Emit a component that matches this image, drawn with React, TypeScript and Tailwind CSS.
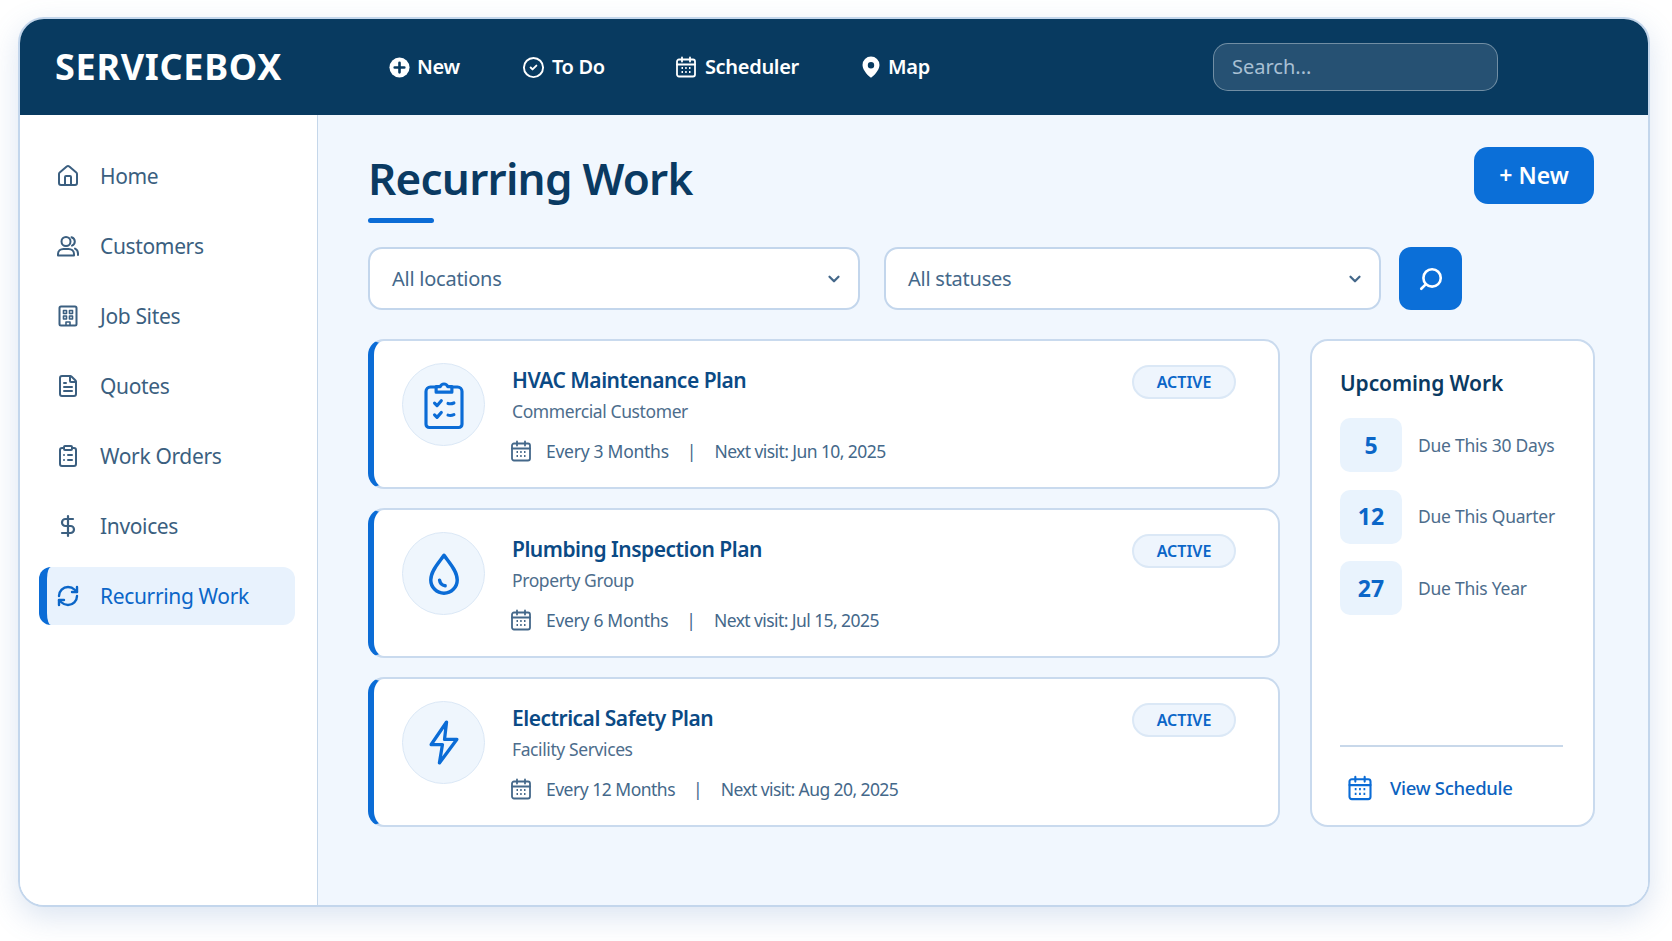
import { ChevronDown, CircleCheck, ClipboardList, DollarSign, FileText, House, RefreshCw, Search } from "lucide-react"
import type { ReactNode } from "react"

function CalendarIcon({ className }: { className: string }) {
  return (
    <svg viewBox="0 0 24 24" fill="none" stroke="currentColor" strokeWidth="1.800" strokeLinecap="round" strokeLinejoin="round" className={className}>
      <rect x="3" y="4.500" width="18" height="17" rx="2" />
      <path d="M3 9.500h18M8 2.500v4M16 2.500v4" />
      <path d="M7.500 13h1.500M11.200 13h1.500M15 13h1.500M7.500 17h1.500M11.200 17h1.500M15 17h1.500" strokeWidth="1.800" strokeLinecap="butt" />
    </svg>
  )
}

function UsersIcon({ className }: { className: string }) {
  return (
    <svg viewBox="0 0 24 24" fill="none" stroke="currentColor" strokeWidth="2" strokeLinecap="round" strokeLinejoin="round" className={className}>
      <circle cx="10" cy="7.500" r="4.500" />
      <path d="M2 21.500v-1.500c0-3 2.500-5 5.500-5h5c3 0 5.500 2 5.500 5v1.500z" />
      <path d="M15.500 3.200c2.200.8 3.300 2.400 3.300 4.300 0 1.800-1 3.300-2.800 4.100M19 14.600c1.900.9 3 2.800 3 5v1.400" />
    </svg>
  )
}

function BuildingIcon({ className }: { className: string }) {
  return (
    <svg viewBox="0 0 24 24" fill="none" stroke="currentColor" strokeWidth="2" strokeLinecap="round" strokeLinejoin="round" className={className}>
      <rect x="3.500" y="2.500" width="17" height="19" rx="1.500" />
      <path strokeWidth="1.600" d="M7.500 6.500h3v3h-3zM13.500 6.500h3v3h-3zM7.500 12h3v3h-3zM13.500 12h3v3h-3zM10 21v-3h4v3" />
    </svg>
  )
}

function ChecklistIcon({ className }: { className: string }) {
  return (
    <svg viewBox="0 0 24 24" fill="none" stroke="currentColor" strokeWidth="1.400" strokeLinecap="round" strokeLinejoin="round" className={className}>
      <path d="M8.500 4H6a2 2 0 0 0-2 2v14.500a1.500 1.500 0 0 0 1.500 1.500h13a1.500 1.500 0 0 0 1.500-1.500V6a2 2 0 0 0-2-2h-2.500" />
      <path d="M8.500 3.800h1.900a1.700 1.700 0 0 1 3.200 0h1.900V6.300h-7z" />
      <path d="m7.800 11.200 1.100 1.100 1.900-2.200M7.800 16.400l1.100 1.100 1.900-2.200M13.800 11.300c.9.300 1.700.2 2.600-.2M13.800 16.500c.9.300 1.700.2 2.600-.2" />
    </svg>
  )
}

function DropIcon({ className }: { className: string }) {
  return (
    <svg viewBox="0 0 24 24" fill="none" stroke="currentColor" strokeWidth="1.800" strokeLinecap="round" strokeLinejoin="round" className={className}>
      <path d="M12 2.200c2.200 3.300 6.900 7.900 6.900 12.900a6.900 6.900 0 0 1-13.800 0c0-5 4.700-9.600 6.900-12.900z" />
      <path d="M9.700 15.200c.2 1.600 1.300 2.700 2.900 2.900" />
    </svg>
  )
}

function BoltIcon({ className }: { className: string }) {
  return (
    <svg viewBox="0 0 29 44" fill="none" stroke="currentColor" strokeWidth="3.200" strokeLinecap="round" strokeLinejoin="round" className={className}>
      <path d="M17 2 2 24h11l-3 18 17-23H15z" />
    </svg>
  )
}

const sideItems: { label: string; icon: ReactNode; active?: boolean }[] = [
  { label: "Home", icon: <House className="h-6 w-6" strokeWidth={2} /> },
  { label: "Customers", icon: <UsersIcon className="h-6 w-6" /> },
  { label: "Job Sites", icon: <BuildingIcon className="h-6 w-6" /> },
  { label: "Quotes", icon: <FileText className="h-6 w-6" strokeWidth={2} /> },
  { label: "Work Orders", icon: <ClipboardList className="h-6 w-6" strokeWidth={2} /> },
  { label: "Invoices", icon: <DollarSign className="h-[26px] w-6" strokeWidth={2.2} /> },
  { label: "Recurring Work", icon: <RefreshCw className="h-6 w-6" strokeWidth={2.4} />, active: true },
]

const plans = [
  { title: "HVAC Maintenance Plan", sub: "Commercial Customer", every: "Every 3 Months", everyClass: "ml-[13px] tracking-[-0.27px]", next: "Next visit: Jun 10, 2025", icon: <ChecklistIcon className="h-[54px] w-[54px]" /> },
  { title: "Plumbing Inspection Plan", sub: "Property Group", every: "Every 6 Months", everyClass: "ml-[13px] tracking-[-0.3px]", next: "Next visit: Jul 15, 2025", icon: <DropIcon className="h-[46px] w-[46px]" /> },
  { title: "Electrical Safety Plan", sub: "Facility Services", every: "Every 12 Months", everyClass: "ml-[13px] tracking-[-0.5px]", next: "Next visit: Aug 20, 2025", icon: <BoltIcon className="h-[45px] w-[30px]" /> },
]

const upcoming = [
  { n: "5", label: "Due This 30 Days" },
  { n: "12", label: "Due This Quarter" },
  { n: "27", label: "Due This Year" },
]

function TopBar() {
  return (
    <header className="flex h-[96px] shrink-0 items-center bg-[#083a60] pl-[35px] pr-[150px] text-white">
      <div className="w-[334px] text-[36px] font-bold leading-none tracking-[0.7px]">SERVICEBOX</div>
      <nav className="flex items-center text-[20px] font-semibold tracking-[-0.3px]">
        <div className="flex items-center gap-[7px]">
          <svg viewBox="0 0 24 24" className="h-[21px] w-[21px]">
            <circle cx="12" cy="12" r="11.500" fill="currentColor" />
            <path d="M12 6.500v11M6.500 12h11" stroke="#083a60" strokeWidth="3" strokeLinecap="round" />
          </svg>
          New
        </div>
        <div className="ml-[62px] flex items-center gap-[7px]">
          <CircleCheck className="h-[23px] w-[23px]" strokeWidth={2} />
          To Do
        </div>
        <div className="ml-[69px] flex items-center gap-[7px]">
          <CalendarIcon className="h-[24px] w-[24px]" />
          Scheduler
        </div>
        <div className="ml-[60px] flex items-center gap-[5px]">
          <svg viewBox="0 0 24 24" className="h-[24px] w-[24px]">
            <path fillRule="evenodd" fill="currentColor" d="M12 1.500a8.500 8.500 0 0 0-8.500 8.500c0 5.500 6.500 11.500 8.500 12.800 2-1.300 8.500-7.300 8.500-12.800A8.500 8.500 0 0 0 12 1.500zm0 5.500a3.200 3.200 0 1 1 0 6.400 3.200 3.200 0 0 1 0-6.400z" />
          </svg>
          Map
        </div>
      </nav>
      <div className="ml-auto flex h-[48px] w-[285px] items-center rounded-[15px] border border-white/35 bg-white/12 pl-[18px] text-[20px] text-[#a9c0d4]">
        Search...
      </div>
    </header>
  )
}

function Sidebar() {
  return (
    <aside className="w-[298px] shrink-0 border-r border-[#c5d7ea] bg-white pl-[19px] pt-[32px]">
      <div className="flex w-[256px] flex-col gap-[12px]">
        {sideItems.map((item) => (
          <div
            key={item.label}
            className={
              item.active
                ? "flex h-[58px] items-center gap-[20px] rounded-[12px] border-l-[8px] border-[#0b6cd6] bg-[#e8f2fd] pl-[9px] text-[21px] tracking-[-0.35px] text-[#0b66c8]"
                : "flex h-[58px] items-center gap-[20px] border-l-[8px] border-transparent pl-[9px] text-[21px] tracking-[-0.35px] text-[#3b5f80]"
            }
          >
            {item.icon}
            <span className="pt-[2px]">{item.label}</span>
          </div>
        ))}
      </div>
    </aside>
  )
}

function Filter({ label, width }: { label: string; width: string }) {
  return (
    <div className={`flex h-[63px] items-center justify-between rounded-[14px] border-2 border-[#c3d6ec] bg-white pl-[22px] pr-[15px] text-[20px] tracking-[-0.25px] text-[#44688a] ${width}`}>
      {label}
      <ChevronDown className="h-[18px] w-[18px]" strokeWidth={3} />
    </div>
  )
}

function PlanCard({ plan }: { plan: (typeof plans)[number] }) {
  return (
    <div className="flex h-[150px] rounded-[16px] border-2 border-l-[6px] border-[#c9daee] border-l-[#0b6cd6] bg-white pl-[28px] pr-[42px] pt-[22px]">
      <div className="flex h-[83px] w-[83px] shrink-0 items-center justify-center rounded-full border border-[#dbe8f6] bg-[#eff6fd] text-[#0b6cd6]">
        {plan.icon}
      </div>
      <div className="ml-[27px] flex-1 pt-[3px]">
        <div className="text-[21px] font-semibold leading-[28px] tracking-[-0.5px] text-[#0b4a85]">{plan.title}</div>
        <div className="mt-[5px] text-[17.500px] leading-[24px] tracking-[-0.4px] text-[#4d6d8c]">{plan.sub}</div>
        <div className="mt-[16px] flex items-center text-[17.500px] leading-[24px] text-[#44688a]">
          <CalendarIcon className="-ml-[3px] h-[24px] w-[24px]" />
          <span className={plan.everyClass}>{plan.every}</span>
          <span className="mx-[18px]">|</span>
          <span className="tracking-[-0.58px]">{plan.next}</span>
        </div>
      </div>
      <div className="mt-[2px] flex h-[34px] w-[104px] items-center justify-center rounded-full border-2 border-[#dbe8f6] bg-[#eef5fd] text-[16px] font-semibold text-[#0b66c8]">
        ACTIVE
      </div>
    </div>
  )
}

function UpcomingPanel() {
  return (
    <div className="flex h-[488px] w-[285px] flex-col rounded-[18px] border-2 border-[#c9daee] bg-white pl-[28px] pr-[30px] pt-[28px]">
      <div className="text-[21px] font-semibold leading-[28px] tracking-[-0.1px] text-[#0a3a62]">Upcoming Work</div>
      <div className="mt-[21px] flex flex-col gap-[17.5px]">
        {upcoming.map((u) => (
          <div key={u.n} className="flex items-center gap-[16px]">
            <div className="flex h-[54px] w-[62px] items-center justify-center rounded-[10px] bg-[#e9f3fd] text-[23px] font-bold text-[#0b66c8]">
              {u.n}
            </div>
            <span className="text-[17.500px] tracking-[-0.25px] text-[#4d6d8c]">{u.label}</span>
          </div>
        ))}
      </div>
      <div className="mt-auto border-t-2 border-[#c8d8ea] pb-[23px] pl-[6px] pt-[27px]">
        <div className="flex items-center gap-[16px] text-[18.500px] font-medium leading-[28px] tracking-[-0.3px] text-[#0b62c0]">
          <CalendarIcon className="h-[28px] w-[28px] text-[#0b6cd6]" />
          View Schedule
        </div>
      </div>
    </div>
  )
}

export default function App() {
  return (
    <div className="h-[941px] w-[1672px] bg-white pl-[18px] pt-[17px] font-['Noto_Sans',sans-serif]">
      <div className="flex h-[890px] w-[1632px] flex-col overflow-hidden rounded-[26px] border-2 border-[#c3d6ec] shadow-[0_10px_30px_rgba(90,130,190,0.22)]">
        <TopBar />
        <div className="flex min-h-0 flex-1">
          <Sidebar />
          <main className="flex-1 bg-[#f1f7fe] pl-[50px] pt-[32px]">
            <div className="flex h-[100px] w-[1226px] items-start justify-between">
              <div>
                <h1 className="text-[44px] font-semibold leading-[62px] tracking-[-0.75px] text-[#0a3a62]">Recurring Work</h1>
                <div className="mt-[9px] h-[5px] w-[66px] rounded-full bg-[#0b6cd6]" />
              </div>
              <button className="flex h-[57px] w-[120px] items-center justify-center rounded-[14px] bg-[#0b6fd8] text-[23px] font-semibold text-white">
                + New
              </button>
            </div>
            <div className="flex items-center">
              <Filter label="All locations" width="w-[492px]" />
              <div className="w-[24px]" />
              <Filter label="All statuses" width="w-[497px]" />
              <button className="ml-[18px] flex h-[63px] w-[63px] items-center justify-center rounded-[12px] bg-[#0b6fd8] text-white">
                <Search className="h-[26px] w-[26px] -scale-x-100" strokeWidth={2.4} />
              </button>
            </div>
            <div className="mt-[29px] flex items-start gap-[30px]">
              <div className="flex w-[912px] flex-col gap-[19px]">
                {plans.map((plan) => (
                  <PlanCard key={plan.title} plan={plan} />
                ))}
              </div>
              <UpcomingPanel />
            </div>
          </main>
        </div>
      </div>
    </div>
  )
}
